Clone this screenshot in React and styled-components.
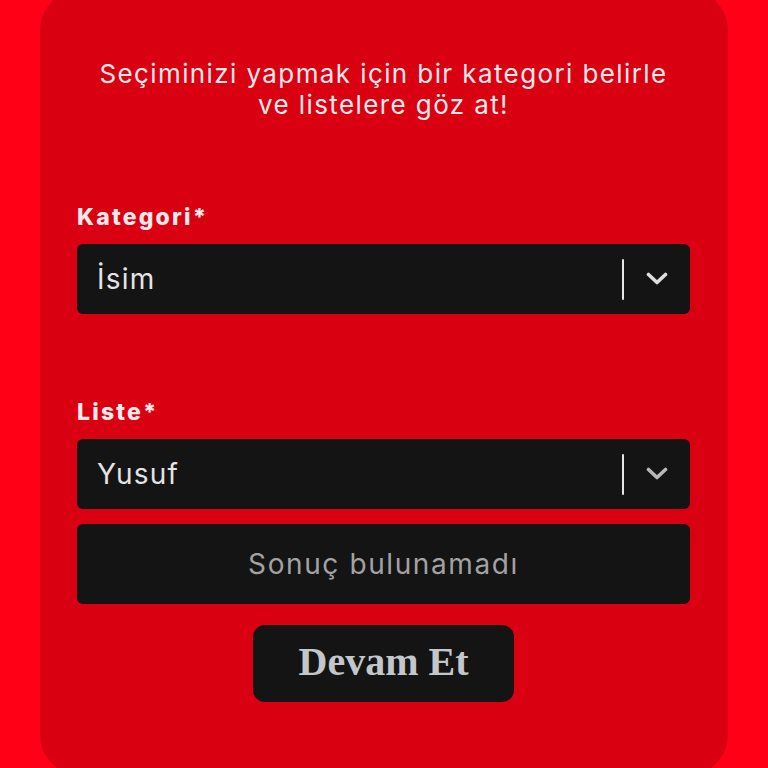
import React from "react";
import styled, { createGlobalStyle } from "styled-components";

const Global = createGlobalStyle`
  html, body { margin: 0; padding: 0; background: #ff0016; overflow: hidden; }
  * { box-sizing: border-box; }
`;

const Page = styled.div`
  width: 768px;
  height: 768px;
  background: #ff0016;
  display: flex;
  justify-content: center;
`;

const Card = styled.div`
  width: 688px;
  height: 785px;
  margin-top: -10px;
  flex-shrink: 0;
  background: #d90012;
  border-radius: 40px;
  padding: 68px 38px 0 37px;
  display: flex;
  flex-direction: column;
  font-family: Inter, "Noto Sans", sans-serif;
`;

const Intro = styled.p`
  margin: 0 0 83px;
  text-align: center;
  color: #fbe9ea;
  font-size: 26px;
  line-height: 31px;
  letter-spacing: 1.4px;
`;

const Label = styled.div`
  color: #fbe9ea;
  font-size: 23px;
  font-weight: 800;
  line-height: 28px;
  margin-bottom: 13px;
  letter-spacing: 2.2px;
`;

const Field = styled.div`
  margin-bottom: ${(p) => p.$gap}px;
`;

const SelectBox = styled.div`
  height: 70px;
  background: #141414;
  border-radius: 6px;
  display: flex;
  align-items: center;
  padding-left: 20px;
`;

const Value = styled.span`
  flex: 1;
  color: #e4e4e4;
  font-size: 28px;
  letter-spacing: 1.2px;
`;

const Divider = styled.span`
  width: 2px;
  height: 41px;
  background: #e6e6e6;
  border-radius: 1px;
`;

const Indicator = styled.span`
  width: 66px;
  display: flex;
  align-items: center;
  justify-content: center;
  color: ${(p) => p.$color};
`;

const Empty = styled.div`
  height: 80px;
  margin-top: 15px;
  background: #141414;
  border-radius: 6px;
  display: flex;
  align-items: center;
  justify-content: center;
  color: #a2a2a2;
  font-size: 28px;
  letter-spacing: 1.6px;
`;

const Actions = styled.div`
  display: flex;
  justify-content: center;
  margin-top: 21px;
`;

const Button = styled.button`
  width: 261px;
  height: 77px;
  border: none;
  border-radius: 12px;
  background: #141414;
  color: #c4c7ca;
  font-family: "Liberation Serif", "DejaVu Serif", serif;
  font-weight: 700;
  font-size: 40px;
  letter-spacing: 0;
  padding: 0 0 4px;
  cursor: pointer;
`;

const Chevron = () => (
  <svg width="22" height="14" viewBox="0 0 22 14" fill="none">
    <path d="M2.5 2.5 L11 10.5 L19.5 2.5" stroke="currentColor" strokeWidth="3.6" strokeLinecap="round" strokeLinejoin="round" />
  </svg>
);

const Select = ({ value, chevronColor }) => (
  <SelectBox>
    <Value>{value}</Value>
    <Divider />
    <Indicator $color={chevronColor}>
      <Chevron />
    </Indicator>
  </SelectBox>
);

export default function App() {
  return (
    <>
      <Global />
      <Page>
        <Card>
          <Intro>
            Seçiminizi yapmak için bir kategori belirle
            <br />
            ve listelere göz at!
          </Intro>
          <Field $gap={84}>
            <Label>Kategori*</Label>
            <Select value="İsim" chevronColor="#dedede" />
          </Field>
          <Field $gap={0}>
            <Label>Liste*</Label>
            <Select value="Yusuf" chevronColor="#b8b8b8" />
          </Field>
          <Empty>Sonuç bulunamadı</Empty>
          <Actions>
            <Button>Devam Et</Button>
          </Actions>
        </Card>
      </Page>
    </>
  );
}
